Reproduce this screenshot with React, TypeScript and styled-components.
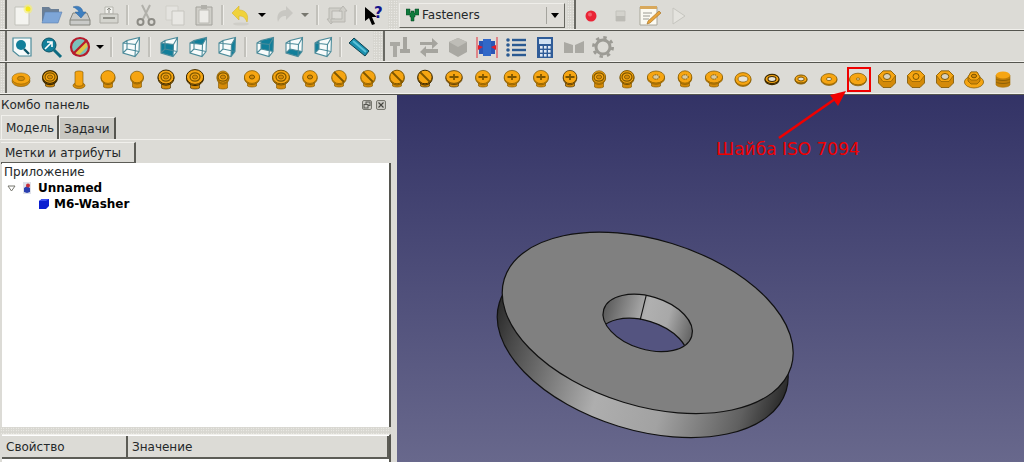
import React from 'react'
import styled, { createGlobalStyle } from 'styled-components'

const GlobalStyle = createGlobalStyle`
  html, body {
    margin: 0;
    padding: 0;
    background: #dcdbd6;
  }
  body {
    font-family: "DejaVu Sans", sans-serif;
    font-size: 12px;
    color: #24282a;
  }
`

const Root = styled.div`
  position: relative;
  width: 1024px;
  height: 462px;
  overflow: hidden;
  display: flex;
  flex-direction: column;
  background: #dcdbd6;
`
const ToolRow = styled.div`
  display: flex;
  align-items: center;
  height: 31px;
  flex: none;
  box-sizing: border-box;
  border-bottom: 1px solid #55554f;
  box-shadow: inset 0 -1px 0 #f1f0ec;
`
const TallRow = styled(ToolRow)`
  height: 32px;
`
const Grip = styled.span<{ $w: number; $line?: boolean }>`
  flex: none;
  align-self: stretch;
  width: ${p => p.$w}px;
  box-sizing: border-box;
  margin-bottom: 1px;
  border-right: 2px solid ${p => (p.$line ? '#6a6a64' : 'transparent')};
  background-image: radial-gradient(#fbfaf8 0.7px, transparent 0.8px);
  background-size: 2.5px 2.5px;
  background-color: #d6d5cf;
`
const Slot = styled.span`
  flex: none;
  width: 29px;
  height: 28px;
  display: flex;
  align-items: center;
  justify-content: center;
`
const Drop = styled.span<{ $w: number; $off?: boolean }>`
  flex: none;
  width: ${p => p.$w}px;
  display: flex;
  justify-content: center;
  &::before {
    content: '';
    border-left: 4px solid transparent;
    border-right: 4px solid transparent;
    border-top: 4px solid ${p => (p.$off ? '#77776f' : '#000')};
  }
`
const Sep = styled.span<{ $w: number }>`
  flex: none;
  width: ${p => p.$w}px;
  height: 20px;
  display: flex;
  justify-content: center;
  &::before {
    content: '';
    width: 2px;
    background: #c2c1bb;
    border-right: 1px solid #efeeea;
  }
`
const Combo = styled.div`
  flex: none;
  width: 166px;
  height: 25px;
  box-sizing: border-box;
  margin: 0 2px 0 1px;
  display: flex;
  align-items: center;
  gap: 3px;
  padding-left: 6px;
  background: #dedcd7;
  border: 1px solid #efeeea;
  border-right-color: #66665f;
  border-bottom-color: #66665f;
`
const ComboArrow = styled.span`
  margin-left: auto;
  width: 16px;
  height: 17px;
  margin-right: 1px;
  display: flex;
  align-items: center;
  justify-content: center;
  border-left: 1px solid #a5a49e;
  &::before {
    content: '';
    border-left: 4px solid transparent;
    border-right: 4px solid transparent;
    border-top: 5px solid #000;
  }
`
const FastenerSlot = styled.span<{ $marked?: boolean }>`
  position: relative;
  flex: none;
  width: 28.86px;
  height: 28px;
  display: flex;
  align-items: center;
  justify-content: center;
  &::after {
    content: '';
    display: ${p => (p.$marked ? 'block' : 'none')};
    position: absolute;
    left: 3px;
    top: 2px;
    width: 24px;
    height: 25px;
    box-sizing: border-box;
    border: 2px solid #f00000;
  }
`
const Body = styled.div`
  flex: 1;
  min-height: 0;
  display: flex;
`
const Panel = styled.aside`
  flex: none;
  width: 397px;
  display: flex;
  flex-direction: column;
  box-sizing: border-box;
  padding-right: 6px;
`
const PanelTitle = styled.div`
  height: 20px;
  flex: none;
  display: flex;
  align-items: center;
  padding: 0 5px 0 1px;
  gap: 4px;
`
const TitleText = styled.span`
  margin-right: auto;
`
const TitleButton = styled.svg`
  width: 10px;
  height: 10px;
`
const TabBar = styled.div`
  height: 24px;
  flex: none;
  display: flex;
  align-items: flex-end;
  padding-left: 1px;
`
const Tab = styled.div<{ $active?: boolean }>`
  box-sizing: border-box;
  height: ${p => (p.$active ? 24 : 22)}px;
  width: ${p => (p.$active ? 58 : 57)}px;
  padding-left: 4px;
  display: flex;
  align-items: center;
  background: ${p => (p.$active ? '#dcdbd6' : '#c8c7c1')};
  border-top: 1px solid #f1f0ec;
  border-left: 1px solid #f1f0ec;
  border-right: 2px solid #55554f;
`
const Pane = styled.div`
  flex: 1;
  min-height: 0;
  display: flex;
  flex-direction: column;
  border-top: 1px solid #f1f0ec;
  padding-top: 2px;
`
const AttrHeader = styled.div`
  flex: none;
  height: 22px;
  width: 135px;
  box-sizing: border-box;
  margin-left: 1px;
  padding-left: 4px;
  display: flex;
  align-items: center;
  border-top: 1px solid #f1f0ec;
  border-right: 2px solid #5c5c56;
  border-bottom: 2px solid #5c5c56;
`
const Tree = styled.div`
  flex: 1;
  min-height: 0;
  margin: -1px 0 0 2px;
  padding-top: 1px;
  background: #fff;
  border-right: 2px solid #55554f;
`
const TreeRow = styled.div<{ $indent: number; $bold?: boolean }>`
  height: 16px;
  display: flex;
  align-items: center;
  gap: 4px;
  padding-left: ${p => p.$indent}px;
  font-weight: ${p => (p.$bold ? 700 : 400)};
  color: ${p => (p.$bold ? '#000' : '#24282a')};
`
const Splitter = styled.div`
  flex: none;
  height: 7px;
  background-image: radial-gradient(#f8f7f4 0.7px, transparent 0.8px);
  background-size: 2.5px 2.5px;
  background-color: #d8d7d1;
`
const PropTable = styled.div`
  flex: none;
  height: 27px;
  margin-left: 2px;
  background: #fff;
  border-right: 2px solid #55554f;
  border-top: 1px solid #f1f0ec;
`
const PropHead = styled.div`
  height: 21px;
  display: flex;
  background: #dcdbd6;
  border-bottom: 2px solid #5c5c56;
  margin-top: 1px;
`
const PropCell = styled.div<{ $w?: number }>`
  flex: ${p => (p.$w ? `0 0 ${p.$w}px` : 1)};
  box-sizing: border-box;
  padding-left: 4px;
  display: flex;
  align-items: center;
  border-right: 2px solid #5c5c56;
`
const Viewport = styled.main`
  flex: 1;
  min-width: 0;
  background: linear-gradient(#333366, #68688c);
`
const Scene = styled.svg`
  display: block;
  width: 100%;
  height: 100%;
`
const ArrowLayer = styled.svg`
  position: absolute;
  left: 0;
  top: 0;
  width: 1024px;
  height: 462px;
  pointer-events: none;
`
const Callout = styled.span`
  position: absolute;
  left: 716px;
  top: 139px;
  font-size: 17px;
  line-height: 20px;
  color: #f00000;
  white-space: nowrap;
`

type SvgProps = { children: React.ReactNode; size?: number }
const Ic = ({ children, size = 24 }: SvgProps) => (
  <svg width={size} height={size} viewBox="0 0 24 24">
    {children}
  </svg>
)

const TEAL = '#127f9a'
const EDGE = '#4c8b9a'

function Cube({ face }: { face?: string }) {
  const polys: Record<string, string> = {
    front: '4,8 16.5,9.5 16,21.5 4,18',
    top: '4,8 8,5.5 20.5,2.5 16.5,9.5',
    right: '16.5,9.5 20.5,2.5 20,16.5 16,21.5',
    rear: '8,5.5 20.5,2.5 20,16.5 8,14',
    bottom: '4,18 8,14 20,16.5 16,21.5',
    left: '4,8 8,5.5 8,14 4,18',
  }
  return (
    <Ic>
      <path d="M4 8 8 5.5 20.5 2.5 20 16.5 16 21.5 4 18Z" fill="#f7fbfb" />
      {face && <polygon points={polys[face]} fill={TEAL} />}
      <path
        d="M4 8 8 5.5 20.5 2.5 20 16.5 16 21.5 4 18ZM4 8 16.5 9.5 16 21.5M16.5 9.5 20.5 2.5M8 5.5 8 14 4 18M8 14 20 16.5"
        fill="none"
        stroke={EDGE}
        strokeWidth="1.1"
      />
    </Ic>
  )
}

const NewDoc = () => (
  <Ic>
    <path d="M5 4h14v18H5z" fill="#f4f4f0" stroke="#c2c2bb" />
    <circle cx="18" cy="6" r="4.5" fill="#f6ee6c" opacity=".6" />
    <circle cx="18" cy="6" r="2.5" fill="#f4e81e" />
  </Ic>
)
const OpenDoc = () => (
  <Ic>
    <path d="M3 4h7l2 2h8v12H3z" fill="#6b7f96" />
    <path d="M6 9h17l-4 11H3z" fill="#7ea6d8" stroke="#5b7fb0" strokeWidth=".6" />
  </Ic>
)
const SaveDoc = () => (
  <Ic>
    <path d="M5 10h14l3 7v5H2v-5z" fill="#c9cac8" stroke="#85867f" />
    <path d="M2 17h20" stroke="#85867f" />
    <path d="M5 4c5-2 9 0 10 5h3l-5 6-6-6h4c-1-2-3-4-6-5z" fill="#3d7fc0" stroke="#2a5f96" strokeWidth=".5" />
  </Ic>
)
const PrintDoc = () => (
  <Ic>
    <path d="M8 4h8v7H8z" fill="#f2f2ee" stroke="#b5b5ae" />
    <path d="M3 11h18v9H3z" fill="#d4d4ce" stroke="#aaa9a2" />
    <path d="M12 5v5M10 7l2-2 2 2" stroke="#8a8a84" fill="none" />
    <path d="M6 15h12" stroke="#8f8f88" strokeWidth="2" />
  </Ic>
)
const CutIc = () => (
  <Ic>
    <path d="M8 2l7 14M16 2 9 16" stroke="#b1b0aa" strokeWidth="2" />
    <circle cx="6.5" cy="19" r="3" fill="none" stroke="#8c8b85" strokeWidth="2" />
    <circle cx="17.5" cy="19" r="3" fill="none" stroke="#8c8b85" strokeWidth="2" />
  </Ic>
)
const CopyIc = () => (
  <Ic>
    <path d="M3 3h12v14H3z" fill="#e4e3df" stroke="#d0cfc9" />
    <path d="M9 8h12v14H9z" fill="#e8e7e3" stroke="#c6c5bf" />
  </Ic>
)
const PasteIc = () => (
  <Ic>
    <path d="M4 4h16v18H4z" fill="#d0cfc9" stroke="#a3a29c" />
    <path d="M7 7h10v13H7z" fill="#ecebe7" stroke="#bab9b3" />
    <path d="M9 2h6v4H9z" fill="#b1b0aa" />
  </Ic>
)
const UndoIc = () => (
  <Ic>
    <path d="M3 10l7-7v4c7 0 10 5 8 12-2-5-4-6-8-6v4z" fill="#f0d23c" stroke="#d8b72a" strokeWidth=".6" />
    <ellipse cx="12" cy="21" rx="8" ry="1.6" fill="#cfcec8" />
  </Ic>
)
const RedoIc = () => (
  <Ic>
    <path d="M21 10l-7-7v4c-7 0-10 5-8 12 2-5 4-6 8-6v4z" fill="#c8c7c2" />
  </Ic>
)
const RefreshIc = () => (
  <Ic>
    <path d="M4 5h14v3H7v8h3l-4 5-4-5h2z" fill="#cfcec8" stroke="#b8b7b1" />
    <path d="M20 19H6v-3h11V8h-3l4-5 4 5h-2z" fill="#cfcec8" stroke="#b8b7b1" />
  </Ic>
)
const WhatsThis = () => (
  <Ic>
    <path d="M3 4v14l4-3 3 7 3-1-3-7h5z" fill="#000" />
    <text x="12" y="15" fontSize="15" fontWeight="700" fontFamily="DejaVu Sans" fill="#14148c">?</text>
  </Ic>
)
const RedDot = () => (
  <Ic>
    <circle cx="12" cy="13" r="5.5" fill="#ea2436" />
    <circle cx="11" cy="11.5" r="2" fill="#f2606c" />
  </Ic>
)
const StopIc = () => (
  <Ic>
    <path d="M8 8h9v10H8z" fill="#d3d2cc" stroke="#c3c2bc" />
    <path d="M8 13h9v5H8z" fill="#bcbbb5" />
  </Ic>
)
const NotepadIc = () => (
  <Ic>
    <path d="M3 4h17v18H3z" fill="#fbfaf2" stroke="#a8a69a" />
    <path d="M3 3h17v3H3z" fill="#d8a85c" />
    <path d="M6 10h9M6 13h7M6 16h6" stroke="#9a9a92" />
    <path d="M22 8 11 18l-1 3 3-1L24 10z" fill="#e8a43c" stroke="#a06c1c" strokeWidth=".6" />
  </Ic>
)
const PlayIc = () => (
  <Ic>
    <path d="M7 5l12 8-12 8z" fill="#e4e3de" stroke="#c6c5bf" />
  </Ic>
)
const FitAll = () => (
  <Ic>
    <path d="M3 3h18v18H9l-6-5z" fill="#f6fafa" stroke="#4c8b9a" strokeWidth="1.2" />
    <circle cx="11" cy="10" r="5" fill={TEAL} />
    <path d="M14 14l5 5" stroke="#0d5366" strokeWidth="2.4" />
  </Ic>
)
const FitSel = () => (
  <Ic>
    <circle cx="10" cy="10" r="7" fill={TEAL} stroke="#0d5366" />
    <path d="M6 14l6-6M8 7h5v5" stroke="#fff" strokeWidth="1.6" fill="none" />
    <path d="M15 15l7 7" stroke="#0d6a80" strokeWidth="3" />
  </Ic>
)
const NoDraw = () => (
  <Ic>
    <circle cx="12" cy="12" r="9" fill="#7cc0bb" />
    <path d="M6 18 17 6l3 5-9 9z" fill="#e0c74a" />
    <circle cx="12" cy="12" r="9" fill="none" stroke="#b71c2c" strokeWidth="2.2" />
    <path d="M5 19 19 5" stroke="#b71c2c" strokeWidth="2.2" />
  </Ic>
)
const RulerIc = () => (
  <Ic>
    <path d="M2 8l5-5 15 13-4 5z" fill="#1a8fae" stroke="#10424f" />
    <path d="M6 6l13 11" stroke="#5ec2d8" strokeWidth="2" />
  </Ic>
)
const BoltOff = () => (
  <Ic>
    <path d="M2 7h10v4H9v11H5V11H2z" fill="#aaa9a3" />
    <path d="M15 2h4v12h3v4H12v-4h3z" fill="#a5a49e" />
  </Ic>
)
const SwapOff = () => (
  <Ic>
    <path d="M3 7h12V3l6 5.5-6 5.5v-4H3zM21 14H9v-3l-6 6 6 5v-4h12z" fill="#a5a49e" />
  </Ic>
)
const BlockOff = () => (
  <Ic>
    <path d="M12 3l9 4v10l-9 5-9-5V7z" fill="#a9a8a2" />
    <path d="M3 7l9 5 9-5-9-4z" fill="#bebdb7" />
  </Ic>
)
const BlueClamp = () => (
  <Ic>
    <path d="M2 2v21M22 2v21" stroke="#e0303c" />
    <path d="M4 6h16v13H4z" fill="#2a56b6" />
    <path d="M8 4h8v17H8z" fill="#3168c8" />
    <path d="M3 10l5 2-5 3zM21 10l-5 2 5 3z" fill="#e01c2c" />
  </Ic>
)
const ListIc = () => (
  <Ic>
    {[5, 10, 15, 20].map(y => (
      <g key={y}>
        <circle cx="4" cy={y} r="1.8" fill="#2a5a92" />
        <path d={`M8 ${y}h14`} stroke="#2a5a92" strokeWidth="2.4" />
      </g>
    ))}
  </Ic>
)
const CalcIc = () => (
  <Ic>
    <path d="M4 2h16v21H4z" fill="#2f5c98" />
    <path d="M6 4h12v5H6z" fill="#cfe0f2" />
    {[11, 15, 19].flatMap(y =>
      [7, 11, 15].map(x => <rect key={`${x}-${y}`} x={x} y={y} width="2.6" height="2.6" fill="#dfe8f4" />),
    )}
  </Ic>
)
const WedgeOff = () => (
  <Ic>
    <path d="M2 7l9 3v8H2zM22 6l-9 4v8h9z" fill="#aaa9a3" />
  </Ic>
)
const GearOff = () => (
  <Ic>
    <circle cx="12" cy="12" r="7" fill="none" stroke="#9c9b95" strokeWidth="3" />
    <circle
      cx="12"
      cy="12"
      r="9.6"
      fill="none"
      stroke="#9c9b95"
      strokeWidth="2.8"
      strokeDasharray="3.4 4.14"
    />
  </Ic>
)
const FastenersLogo = () => (
  <svg width="13" height="14" viewBox="0 0 13 14">
    <path d="M0 1h4v4h1V3h3v2h1V1h4v6H9v2h-1v4H5V9H4V7H0z" fill="#0f7a3c" stroke="#07401e" strokeWidth=".5" />
  </svg>
)

const OR = '#f6a512'
const ORD = '#d48a08'
const LN = '#7d5600'

type Drive = 'none' | 'slot' | 'cross' | 'socket' | 'ring' | 'torx'
type FastSpec = {
  kind: 'disc' | 'bolt' | 'pin' | 'washer' | 'nut' | 'flangeNut' | 'plug'
  drive?: Drive
  dark?: boolean
  rx?: number
  ry?: number
  hole?: number
  shaft?: number
  sw?: number
}

function DriveMark({ drive, cy }: { drive: Drive; cy: number }) {
  if (drive === 'slot')
    return <path d={`M7 ${cy - 5} 17 ${cy + 5}`} stroke={LN} strokeWidth="1.8" />
  if (drive === 'cross')
    return <path d={`M7.5 ${cy}h9M12 ${cy - 3}v6`} stroke={LN} strokeWidth="1.8" />
  if (drive === 'socket')
    return <ellipse cx="12" cy={cy} rx="2.6" ry="2" fill={ORD} stroke={LN} />
  if (drive === 'ring')
    return (
      <>
        <ellipse cx="12" cy={cy} rx="5" ry="4.2" fill="none" stroke={LN} strokeWidth="1.2" />
        <ellipse cx="12" cy={cy} rx="2.6" ry="2" fill={ORD} stroke={LN} strokeWidth=".8" />
      </>
    )
  if (drive === 'torx')
    return <ellipse cx="12" cy={cy} rx="3.2" ry="2.2" fill="#d8c9a0" stroke={LN} strokeDasharray="1.4 .8" />
  return null
}

function Fastener({ spec }: { spec: FastSpec }) {
  const rx = spec.rx ?? 8
  const ry = spec.ry ?? 6
  const line = spec.dark ? '#3d2a00' : LN
  const w = spec.sw ?? 0.7
  if (spec.kind === 'washer') {
    return (
      <Ic>
        <ellipse cx="12" cy="13" rx={rx} ry={ry} fill={ORD} stroke={line} strokeWidth={w} />
        <ellipse cx="12" cy="12" rx={rx} ry={ry} fill={OR} stroke={line} strokeWidth={w} />
        <ellipse
          cx="12"
          cy="12"
          rx={spec.hole}
          ry={(spec.hole ?? 0) * 0.62}
          fill="#e6e2d6"
          stroke={line}
          strokeWidth={w}
        />
      </Ic>
    )
  }
  if (spec.kind === 'nut') {
    return (
      <Ic>
        <path d="M3.5 8.5 8 4h8l4.500 4.500V16L16 20.500H8L3.500 16z" fill={ORD} stroke={line} strokeWidth=".8" />
        <path d="M3.500 8.500 8 4h8l4.500 4.500L16 14.500H8z" fill={OR} stroke={line} strokeWidth=".6" />
        <ellipse cx="12" cy="9.500" rx={spec.hole ?? 3.6} ry="3" fill={spec.drive === 'none' ? OR : '#d8d2bf'} stroke={line} />
      </Ic>
    )
  }
  if (spec.kind === 'flangeNut') {
    return (
      <Ic>
        <ellipse cx="12" cy="15" rx="9.6" ry="6" fill={OR} stroke={line} strokeWidth=".7" />
        <path d="M6 10l3-5h6l3 5v4l-3 3H9l-3-3z" fill={ORD} stroke={line} strokeWidth=".7" />
        <path d="M6 10l3-5h6l3 5-3 3H9z" fill={OR} stroke={line} strokeWidth=".6" />
        <ellipse cx="12" cy="9" rx="2.6" ry="1.8" fill={ORD} stroke={line} />
      </Ic>
    )
  }
  if (spec.kind === 'plug') {
    return (
      <Ic>
        <path d="M5 8h14v10c-2 3-12 3-14 0z" fill="#bf7d08" stroke="#a87408" strokeWidth=".6" />
        <path d="M5 12c3 2 11 2 14 0M5 15c3 2 11 2 14 0" stroke="#8f6206" fill="none" />
        <ellipse cx="12" cy="8" rx="7" ry="3.6" fill={OR} />
      </Ic>
    )
  }
  if (spec.kind === 'disc') {
    return (
      <Ic>
        <ellipse cx="12" cy="14" rx="9" ry="5.6" fill={ORD} stroke={line} strokeWidth=".6" />
        <ellipse cx="12" cy="11.5" rx="9" ry="5.6" fill={OR} stroke={line} strokeWidth=".5" />
        <ellipse cx="12" cy="11.5" rx="3.6" ry="2.2" fill={ORD} stroke={line} strokeWidth=".6" />
      </Ic>
    )
  }
  if (spec.kind === 'pin') {
    return (
      <Ic>
        <ellipse cx="12" cy="18.5" rx="6" ry="3.2" fill={ORD} stroke={line} strokeWidth=".6" />
        <path d="M8 5c2-1.4 6-1.4 8 0v13c-2 1.6-6 1.6-8 0z" fill={OR} stroke={line} strokeWidth=".6" />
      </Ic>
    )
  }
  const cy = 10
  const shaft = spec.shaft ?? 22
  return (
    <Ic>
      <path d={`M7.5 ${cy}h9V${shaft - 1}c-2 1.4-7 1.4-9 0z`} fill={ORD} stroke={line} strokeWidth=".6" />
      <ellipse cx="12" cy={cy + 1.2} rx={rx} ry={ry} fill={ORD} stroke={line} strokeWidth={w} />
      <ellipse cx="12" cy={cy} rx={rx} ry={ry} fill={OR} stroke={line} strokeWidth={w} />
      {spec.drive && <DriveMark drive={spec.drive} cy={cy} />}
    </Ic>
  )
}

const FASTENERS: FastSpec[] = [
  { kind: 'disc' },
  { kind: 'bolt', drive: 'ring', rx: 7.4, ry: 6.4, dark: true, sw: 1.1, shaft: 20 },
  { kind: 'pin' },
  { kind: 'bolt', rx: 7, ry: 6.4, drive: 'none', shaft: 21 },
  { kind: 'bolt', rx: 6.4, ry: 5.8, drive: 'none', shaft: 21 },
  { kind: 'bolt', rx: 8, ry: 7, drive: 'ring', dark: true, sw: 1 },
  { kind: 'bolt', rx: 8.6, ry: 7.4, drive: 'ring', dark: true, sw: 1 },
  { kind: 'bolt', rx: 6, ry: 6, drive: 'ring' },
  { kind: 'bolt', rx: 7.6, ry: 6.4, drive: 'socket', shaft: 20 },
  { kind: 'bolt', rx: 8.4, ry: 6.8, drive: 'ring', sw: 1 },
  { kind: 'bolt', rx: 7.2, ry: 6.4, drive: 'socket', shaft: 20 },
  { kind: 'bolt', rx: 7.2, ry: 6.6, drive: 'slot', shaft: 20 },
  { kind: 'bolt', rx: 7.2, ry: 6.6, drive: 'slot', shaft: 20 },
  { kind: 'bolt', rx: 7.2, ry: 6.8, drive: 'slot', shaft: 20, sw: 1 },
  { kind: 'bolt', rx: 7.2, ry: 6.8, drive: 'slot', shaft: 20, dark: true, sw: 1 },
  { kind: 'bolt', rx: 8.2, ry: 6.4, drive: 'cross', shaft: 20, dark: true },
  { kind: 'bolt', rx: 7.4, ry: 6.6, drive: 'cross', shaft: 20 },
  { kind: 'bolt', rx: 7.8, ry: 6.6, drive: 'cross', shaft: 20 },
  { kind: 'bolt', rx: 7.4, ry: 6.6, drive: 'cross', shaft: 20 },
  { kind: 'bolt', rx: 6.8, ry: 6.6, drive: 'cross', shaft: 20, dark: true },
  { kind: 'bolt', rx: 6.6, ry: 6.2, drive: 'ring', shaft: 21 },
  { kind: 'bolt', rx: 7, ry: 6.4, drive: 'ring', shaft: 21, sw: 1 },
  { kind: 'bolt', rx: 8.6, ry: 6, drive: 'torx', shaft: 20 },
  { kind: 'bolt', rx: 6.8, ry: 6.2, drive: 'torx', shaft: 20 },
  { kind: 'bolt', rx: 8.6, ry: 6, drive: 'torx', shaft: 20 },
  { kind: 'washer', rx: 8, ry: 6.4, hole: 5 },
  { kind: 'washer', rx: 7, ry: 4.6, hole: 4, dark: true, sw: 1.1 },
  { kind: 'washer', rx: 6, ry: 4, hole: 3.2, sw: 1 },
  { kind: 'washer', rx: 8, ry: 5.4, hole: 2.6 },
  { kind: 'washer', rx: 8.4, ry: 5.8, hole: 1.7 },
  { kind: 'nut', hole: 3.6 },
  { kind: 'nut', hole: 3, drive: 'none' },
  { kind: 'nut', hole: 3.8 },
  { kind: 'flangeNut' },
  { kind: 'plug' },
]

const MARKED = 29

function WasherScene() {
  // rotated ellipses: everything shares the washer's tilt about its centre
  const tilt = 'rotate(17)'
  return (
    <Scene viewBox="0 0 627 366" aria-label="M6 washer">
      <defs>
        <linearGradient id="wall" x1="0" x2="1" y1="0" y2="0">
          <stop offset="0" stopColor="#2c2c2c" />
          <stop offset=".08" stopColor="#4a4a4a" />
          <stop offset=".4" stopColor="#aeaeae" />
          <stop offset=".62" stopColor="#a2a2a2" />
          <stop offset=".88" stopColor="#606060" />
          <stop offset="1" stopColor="#2b2b2b" />
        </linearGradient>
        <linearGradient id="bore" x1="0" x2="1" y1="0" y2="0">
          <stop offset="0" stopColor="#5b5b5b" />
          <stop offset=".45" stopColor="#b0b0b0" />
          <stop offset=".7" stopColor="#a8a8a8" />
          <stop offset="1" stopColor="#636363" />
        </linearGradient>
        <clipPath id="holeClip">
          <ellipse rx="46" ry="26.5" transform={tilt} />
        </clipPath>
      </defs>
      <g transform="translate(250.7 227.4)">
        <g transform="translate(-5 24)">
          <ellipse rx="150" ry="83" transform={tilt} fill="url(#wall)" stroke="#111" strokeWidth="1.2" />
        </g>
        <ellipse rx="150" ry="83" transform={tilt} fill="#808080" stroke="#111" strokeWidth="1.2" />
        <ellipse rx="46" ry="26.5" transform={tilt} fill="url(#bore)" />
        <g clipPath="url(#holeClip)">
          <g transform="translate(-5 24)">
            <ellipse rx="46" ry="26.5" transform={tilt} fill="#545480" stroke="#111" strokeWidth="1.2" />
          </g>
        </g>
        <ellipse rx="46" ry="26.5" transform={tilt} fill="none" stroke="#111" strokeWidth="1.2" />
        <path d="M-1.5 -27.5-7.5 -3" stroke="#111" strokeWidth="1.1" />
      </g>
    </Scene>
  )
}

export default function App() {
  return (
    <Root>
      <GlobalStyle />
      <ToolRow>
        <Grip $w={7} $line />
        <Slot><NewDoc /></Slot>
        <Slot><OpenDoc /></Slot>
        <Slot><SaveDoc /></Slot>
        <Slot><PrintDoc /></Slot>
        <Sep $w={8} />
        <Slot><CutIc /></Slot>
        <Slot><CopyIc /></Slot>
        <Slot><PasteIc /></Slot>
        <Sep $w={8} />
        <Slot><UndoIc /></Slot>
        <Drop $w={14} />
        <Slot><RedoIc /></Slot>
        <Drop $w={14} $off />
        <Sep $w={10} />
        <Slot><RefreshIc /></Slot>
        <Sep $w={8} />
        <Slot><WhatsThis /></Slot>
        <Grip $w={10} />
        <Combo>
          <FastenersLogo />
          Fasteners
          <ComboArrow />
        </Combo>
        <Grip $w={9} $line />
        <Slot><RedDot /></Slot>
        <Slot><StopIc /></Slot>
        <Slot><NotepadIc /></Slot>
        <Slot><PlayIc /></Slot>
      </ToolRow>
      <TallRow>
        <Grip $w={7} $line />
        <Slot><FitAll /></Slot>
        <Slot><FitSel /></Slot>
        <Slot><NoDraw /></Slot>
        <Drop $w={12} />
        <Sep $w={10} />
        <Slot><Cube /></Slot>
        <Sep $w={9} />
        <Slot><Cube face="front" /></Slot>
        <Slot><Cube face="top" /></Slot>
        <Slot><Cube face="right" /></Slot>
        <Sep $w={9} />
        <Slot><Cube face="rear" /></Slot>
        <Slot><Cube face="bottom" /></Slot>
        <Slot><Cube face="left" /></Slot>
        <Sep $w={7} />
        <Slot><RulerIc /></Slot>
        <Grip $w={12} $line />
        <Slot><BoltOff /></Slot>
        <Slot><SwapOff /></Slot>
        <Slot><BlockOff /></Slot>
        <Slot><BlueClamp /></Slot>
        <Slot><ListIc /></Slot>
        <Slot><CalcIc /></Slot>
        <Slot><WedgeOff /></Slot>
        <Slot><GearOff /></Slot>
      </TallRow>
      <TallRow>
        <Grip $w={7} $line />
        {FASTENERS.map((spec, i) => (
          <FastenerSlot key={i} $marked={i === MARKED}>
            <Fastener spec={spec} />
          </FastenerSlot>
        ))}
      </TallRow>
      <Body>
        <Panel>
          <PanelTitle>
            <TitleText>Комбо панель</TitleText>
            <TitleButton viewBox="0 0 10 10">
              <rect x=".5" y=".5" width="9" height="9" rx="1.5" fill="#cbcac4" stroke="#77776f" />
              <rect x="4" y="2" width="4" height="3.5" fill="none" stroke="#55554f" />
              <rect x="2" y="4.5" width="4" height="3.5" fill="#cbcac4" stroke="#55554f" />
            </TitleButton>
            <TitleButton viewBox="0 0 10 10">
              <rect x=".5" y=".5" width="9" height="9" rx="1.5" fill="#cbcac4" stroke="#77776f" />
              <path d="M2.5 2.5l5 5M7.5 2.5l-5 5" stroke="#44443f" strokeWidth="1.1" />
            </TitleButton>
          </PanelTitle>
          <TabBar>
            <Tab $active>Модель</Tab>
            <Tab>Задачи</Tab>
          </TabBar>
          <Pane>
            <AttrHeader>Метки и атрибуты</AttrHeader>
            <Tree>
              <TreeRow $indent={2}>Приложение</TreeRow>
              <TreeRow $indent={5} $bold>
                <svg width="9" height="9" viewBox="0 0 9 9">
                  <path d="M1 2h7L4.5 7z" fill="#fff" stroke="#77776f" />
                </svg>
                <svg width="14" height="14" viewBox="0 0 14 14">
                  <path d="M3 1h8v12H3z" fill="#dfe2ea" />
                  <path d="M4 7l3-2 3 2v4l-3 1-3-1z" fill="#2a3fb0" />
                  <circle cx="8" cy="4.5" r="2" fill="#c8303c" />
                </svg>
                Unnamed
              </TreeRow>
              <TreeRow $indent={36} $bold>
                <svg width="12" height="12" viewBox="0 0 12 12">
                  <path d="M1 3l3-2h7v7l-3 3H1z" fill="#0a1ed0" />
                  <path d="M1 3l3-2h7L8 3z" fill="#3c50f0" />
                </svg>
                M6-Washer
              </TreeRow>
            </Tree>
            <Splitter />
            <PropTable>
              <PropHead>
                <PropCell $w={126}>Свойство</PropCell>
                <PropCell>Значение</PropCell>
              </PropHead>
            </PropTable>
          </Pane>
        </Panel>
        <Viewport>
          <WasherScene />
        </Viewport>
      </Body>
      <ArrowLayer viewBox="0 0 1024 462">
        <path d="M779 138 835 99" stroke="#f00000" strokeWidth="2.6" />
        <path d="M846 91 830 95 838 106z" fill="#f00000" />
      </ArrowLayer>
      <Callout>Шайба ISO 7094</Callout>
    </Root>
  )
}
